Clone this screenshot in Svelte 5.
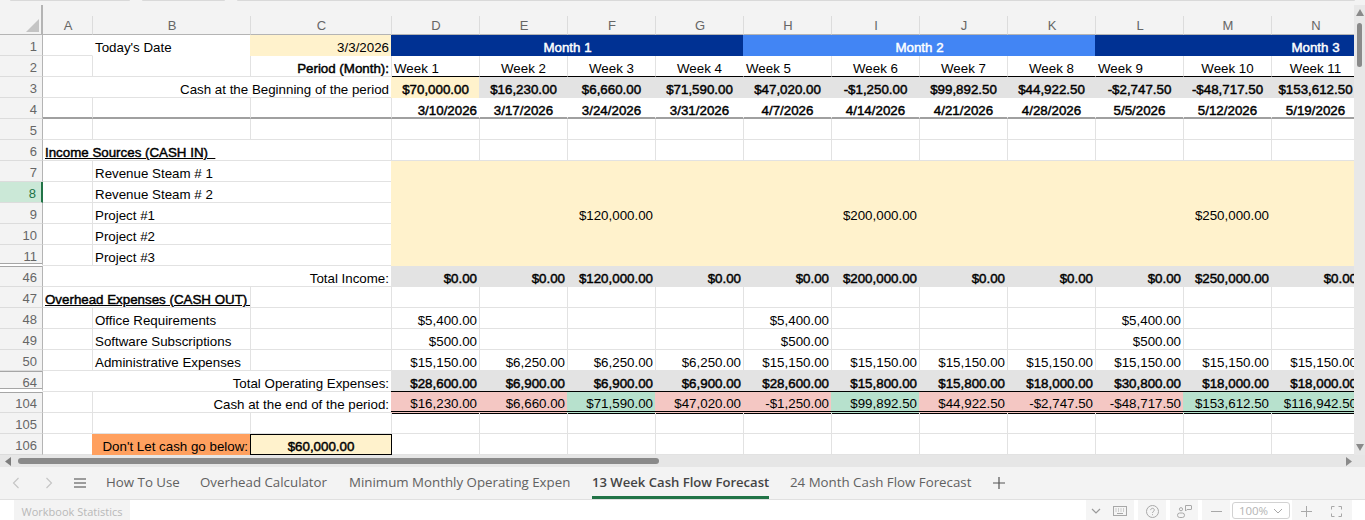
<script>
  const columns = ['A', 'B', 'C', 'D', 'E', 'F', 'G', 'H', 'I', 'J', 'K', 'L', 'M', 'N'];

  const cell = (t = '', cls = '', span = 1) => ({ t, cls, span });
  const weeks = (values, cls) => values.map((v) => cell(v, cls));
  const blanks = (cls = '') => Array.from({ length: 11 }, () => cell('', cls));
  const sparse = (hits, cls = 'r') =>
    Array.from({ length: 11 }, (_, i) => cell(hits[i] || '', cls));

  const row3 = ['$70,000.00', '$16,230.00', '$6,660.00', '$71,590.00', '$47,020.00', '-$1,250.00', '$99,892.50', '$44,922.50', '-$2,747.50', '-$48,717.50', '$153,612.50'];
  const row4 = ['3/10/2026', '3/17/2026', '3/24/2026', '3/31/2026', '4/7/2026', '4/14/2026', '4/21/2026', '4/28/2026', '5/5/2026', '5/12/2026', '5/19/2026'];
  const income = ['$0.00', '$0.00', '$120,000.00', '$0.00', '$0.00', '$200,000.00', '$0.00', '$0.00', '$0.00', '$250,000.00', '$0.00'];
  const admin = ['$15,150.00', '$6,250.00', '$6,250.00', '$6,250.00', '$15,150.00', '$15,150.00', '$15,150.00', '$15,150.00', '$15,150.00', '$15,150.00', '$15,150.00'];
  const opex = ['$28,600.00', '$6,900.00', '$6,900.00', '$6,900.00', '$28,600.00', '$15,800.00', '$15,800.00', '$18,000.00', '$30,800.00', '$18,000.00', '$18,000.00'];
  const ending = [
    ['$16,230.00', 'bad'], ['$6,660.00', 'bad'], ['$71,590.00', 'good'], ['$47,020.00', 'bad'],
    ['-$1,250.00', 'bad'], ['$99,892.50', 'good'], ['$44,922.50', 'bad'], ['-$2,747.50', 'bad'],
    ['-$48,717.50', 'bad'], ['$153,612.50', 'good'], ['$116,942.50', 'good']
  ];

  const weekRow = ['Week 1', 'Week 2', 'Week 3', 'Week 4', 'Week 5', 'Week 6', 'Week 7', 'Week 8', 'Week 9', 'Week 10', 'Week 11'].map((w, i) => {
    const first = i % 4 === 0;
    const last = i % 4 === 3;
    return cell(w, `under ${first ? 'l' : 'c'} ${last ? 'noright' : ''}`);
  });

  const rows = [
    { n: 1, cells: [
      cell('', 'noright'), cell("Today's Date", 'l nobottom'), cell('3/3/2026', 'r yellow'),
      cell('Month 1', 'c b dark', 4), cell('Month 2', 'c b blue', 4), cell('', 'dark', 2), cell('Month 3', 'c b dark')
    ] },
    { n: 2, cells: [cell(), cell(), cell('Period (Month):', 'r b'), ...weekRow] },
    { n: 3, cells: [
      cell('Cash at the Beginning of the period', 'r', 3),
      ...row3.map((v, i) => cell(v, `c b ${i === 0 ? 'yellow' : 'gray'}`))
    ] },
    { n: 4, cells: [
      cell('', 'freeze'), cell('', 'freeze'), cell('', 'freeze'),
      ...row4.map((v, i) => cell(v, `b freeze noright ${i === 0 ? 'r' : 'c'}`))
    ] },
    { n: 5, cells: [cell(), cell(), cell(), ...blanks()] },
    { n: 6, cells: [cell('Income Sources (CASH IN)  ', 'b u', 3), ...blanks()] },
    { n: 7, cells: [cell(), cell('Revenue Steam # 1', 'l', 2), ...blanks('yellow')] },
    { n: 8, sel: true, cells: [cell(), cell('Revenue Steam # 2', 'l', 2), ...blanks('yellow')] },
    { n: 9, cells: [cell(), cell('Project #1', 'l', 2), ...sparse({ 2: '$120,000.00', 5: '$200,000.00', 9: '$250,000.00' }, 'r yellow')] },
    { n: 10, cells: [cell(), cell('Project #2', 'l', 2), ...blanks('yellow')] },
    { n: 11, edge: 'below', cells: [cell(), cell('Project #3', 'l', 2), ...blanks('yellow')] },
    { n: 46, edge: 'above', cells: [cell('Total Income:', 'r', 3), ...weeks(income, 'r b gray')] },
    { n: 47, cells: [cell('Overhead Expenses (CASH OUT) ', 'b u', 2), cell(), ...blanks()] },
    { n: 48, cells: [cell(), cell('Office Requirements', 'l'), cell(), ...sparse({ 0: '$5,400.00', 4: '$5,400.00', 8: '$5,400.00' })] },
    { n: 49, cells: [cell(), cell('Software Subscriptions', 'l'), cell(), ...sparse({ 0: '$500.00', 4: '$500.00', 8: '$500.00' })] },
    { n: 50, cells: [cell(), cell('Administrative Expenses', 'l'), cell(), ...weeks(admin, 'r')] },
    { n: 64, edge: 'both', cells: [cell('Total Operating Expenses:', 'r', 3), ...weeks(opex, 'r b gray blackline')] },
    { n: 104, edge: 'above', cells: [
      cell(), cell('Cash at the end of the period:', 'r', 2),
      ...ending.map(([v, state]) => cell(v, `r doubleline ${state}`))
    ] },
    { n: 105, cells: [cell(), cell(), cell(), ...blanks()] },
    { n: 106, cells: [
      cell(), cell("Don't Let cash go below:", 'r orange'), cell('$60,000.00', 'c b yellow boxed'), ...blanks()
    ] }
  ];

  const tabs = [
    { label: 'How To Use', w: 94 },
    { label: 'Overhead Calculator', w: 149 },
    { label: 'Minimum Monthly Operating Expen', w: 243 },
    { label: '13 Week Cash Flow Forecast', w: 198, active: true },
    { label: '24 Month Cash Flow Forecast', w: 202 }
  ];
</script>

<div class="app">
  <div class="strip">
    <span class="seg s1"></span>
    <span class="seg s2"></span>
    <span class="seg s3"></span>
  </div>

  <div class="main">
    <div class="sheet">
      <div class="grid">
        <div class="corner">
          <svg width="13" height="13" viewBox="0 0 13 13"><polygon points="13,0 13,13 0,13" fill="#c4c4c4" /></svg>
        </div>
        {#each columns as c}
          <div class="colhead">{c}</div>
        {/each}

        {#each rows as row}
          <div class="rowhead {row.edge || ''}" class:sel={row.sel}>{row.n}</div>
          {#each row.cells as x}
            <div class="cell {x.cls}" style:grid-column="span {x.span}">{x.t}</div>
          {/each}
        {/each}
      </div>
    </div>

    <div class="vbar">
      <svg class="arrow-up" width="8" height="7" viewBox="0 0 8 7"><polygon points="4,0 8,7 0,7" fill="#8a8a8a" /></svg>
      <span class="vthumb"></span>
      <svg class="arrow-down" width="8" height="7" viewBox="0 0 8 7"><polygon points="0,0 8,0 4,7" fill="#8a8a8a" /></svg>
    </div>
  </div>

  <div class="hbar">
    <svg width="6" height="9" viewBox="0 0 6 9"><polygon points="6,0 6,9 0,4.5" fill="#7d7d7d" /></svg>
    <span class="hthumb"></span>
    <svg class="arrow-right" width="6" height="9" viewBox="0 0 6 9"><polygon points="0,0 6,4.5 0,9" fill="#8a8a8a" /></svg>
  </div>

  <div class="tabbar">
    <div class="navs">
      <svg width="8" height="12" viewBox="0 0 8 12"><path d="M6.5 1 1.5 6l5 5" fill="none" stroke="#c4c4c4" stroke-width="1.1" /></svg>
      <svg width="8" height="12" viewBox="0 0 8 12"><path d="M1.5 1l5 5-5 5" fill="none" stroke="#c4c4c4" stroke-width="1.1" /></svg>
      <svg class="menu" width="12" height="10" viewBox="0 0 12 10"><path d="M0 1h12M0 5h12M0 9h12" stroke="#444" stroke-width="1.1" /></svg>
    </div>
    {#each tabs as tab}
      <div class="tab" class:active={tab.active} style:width="{tab.w}px"><span>{tab.label}</span></div>
    {/each}
    <svg class="plus" width="12" height="12" viewBox="0 0 12 12"><path d="M6 0v12M0 6h12" stroke="#555" stroke-width="1.2" /></svg>
  </div>

  <div class="status">
    <div class="stats">Workbook Statistics</div>
    <div class="tools">
      <div class="chip w20">
        <svg width="10" height="6" viewBox="0 0 10 6"><path d="M1 1l4 4 4-4" fill="none" stroke="#9a9a9a" stroke-width="1.2" /></svg>
      </div>
      <div class="chip w28">
        <svg width="14" height="10" viewBox="0 0 14 10"><rect x=".5" y=".5" width="13" height="9" fill="none" stroke="#a8a8a8" /><path d="M2.5 3h1M5 3h1M7.5 3h1M10 3h1M2.5 5h1M5 5h1M7.5 5h1M10 5h1M4 7.5h6" stroke="#a8a8a8" /></svg>
      </div>
      <div class="chip w28 ml4">
        <svg width="13" height="13" viewBox="0 0 13 13"><circle cx="6.5" cy="6.5" r="6" fill="none" stroke="#a8a8a8" /><path d="M4.7 5.1c0-1.1.8-1.8 1.8-1.8s1.8.7 1.8 1.7c0 1.4-1.8 1.5-1.8 3" fill="none" stroke="#a8a8a8" /><path d="M6.5 9.2v1" stroke="#a8a8a8" /></svg>
      </div>
      <div class="chip w28 ml4">
        <svg width="15" height="13" viewBox="0 0 15 13"><circle cx="4" cy="4.2" r="1.6" fill="none" stroke="#a8a8a8" /><rect x=".5" y="8" width="7" height="4.5" rx="2.2" fill="none" stroke="#a8a8a8" /><path d="M8.5.5h5.5a.5.5 0 0 1 .5.5v3a.5.5 0 0 1-.5.5h-4L8.5 6z" fill="none" stroke="#a8a8a8" /></svg>
      </div>
      <div class="chip w28 ml4">
        <svg width="11" height="1" viewBox="0 0 11 1"><path d="M0 .5h11" stroke="#a8a8a8" /></svg>
      </div>
      <div class="zoombox">
        <span>100%</span>
        <svg width="10" height="6" viewBox="0 0 10 6"><path d="M1 1l4 4 4-4" fill="none" stroke="#a8a8a8" /></svg>
      </div>
      <div class="chip w28 ml2">
        <svg width="11" height="11" viewBox="0 0 11 11"><path d="M5.5 0v11M0 5.5h11" stroke="#a8a8a8" /></svg>
      </div>
      <div class="chip w32">
        <svg width="11" height="11" viewBox="0 0 11 11"><path d="M.5 3.5v-3h3M7.5.5h3v3M10.5 7.5v3h-3M3.5 10.5h-3v-3" fill="none" stroke="#a8a8a8" /></svg>
      </div>
    </div>
  </div>
</div>

<style>
  :global(body) {
    margin: 0;
    background: #fff;
  }

  .app {
    width: 1365px;
    height: 520px;
    overflow: hidden;
    font-family: "Liberation Sans", Arial, sans-serif;
  }

  .strip {
    display: flex;
    height: 2px;
    background: #f3f3f3;
  }

  .seg {
    height: 1px;
    background: #d9d9d9;
    border-radius: 0 0 2px 2px;
  }
  .s1 { width: 120px; margin-left: 10px; }
  .s2 { width: 83px; margin-left: 12px; }
  .s3 { width: 1118px; margin-left: 12px; }

  .main {
    display: flex;
    height: 453px;
    background: #f3f3f3;
  }

  .sheet {
    width: 1354px;
    overflow: hidden;
    padding-top: 14px;
    box-sizing: border-box;
  }

  .grid {
    display: grid;
    grid-template-columns: 43px 50px 158px 141px repeat(11, 88px);
    grid-template-rows: 19px;
    grid-auto-rows: 21px;
    background: #fff;
    font-size: 13.33px;
    color: #000;
  }

  .corner {
    background: #f3f3f3;
    border-bottom: 1px solid #b4b4b4;
    border-right: 2px solid #b4b4b4;
    margin-top: -11px;
    height: 30px;
    box-sizing: border-box;
    padding: 14px 0 0 26px;
  }
  .corner svg { display: block; }

  .colhead {
    background: #f3f3f3;
    border-right: 1px solid #dcdcdc;
    border-bottom: 1px solid #b4b4b4;
    color: #666;
    font-size: 13px;
    line-height: 19px;
    text-align: center;
    padding-left: 1px;
    box-sizing: border-box;
  }

  .rowhead {
    background: #f3f3f3;
    border-right: 1px solid #b4b4b4;
    border-bottom: 1px solid #dcdcdc;
    color: #666;
    font-size: 13px;
    line-height: 20px;
    text-align: right;
    padding: 2px 5px 0 0;
    box-sizing: border-box;
    overflow: hidden;
  }
  .rowhead.below {
    border-bottom: 2px solid #fff;
    box-shadow: inset 0 -1px #a6a6a6;
  }
  .rowhead.above { box-shadow: inset 0 1px #a6a6a6; }
  .rowhead.both {
    border-bottom: 3px solid #fff;
    box-shadow: inset 0 1px #a6a6a6, inset 0 -1px #a6a6a6;
  }
  .rowhead.sel {
    background: #cbe8d7;
    color: #217346;
    border-right: 2px solid #217346;
  }

  .cell {
    box-sizing: border-box;
    border-right: 1px solid #e2e2e2;
    border-bottom: 1px solid #e2e2e2;
    line-height: 20px;
    padding: 3px 2px 0;
    white-space: pre;
    overflow: hidden;
  }

  .l { text-align: left; }
  .r { text-align: right; }
  .c { text-align: center; }
  /* the reference's bold keeps the regular advance widths */
  .b { -webkit-text-stroke: 0.45px currentColor; }
  .u { text-decoration: underline; }
  .noright { border-right-color: transparent; }
  .nobottom { border-bottom-color: transparent; }

  /* fills cover the gridline to their left */
  .yellow, .gray, .dark, .blue, .bad, .good, .orange { margin-left: -1px; }
  .c.yellow, .c.gray, .c.dark, .c.blue { padding-left: 3px; }
  .yellow { background: #fff2cc; border-color: transparent; }
  .gray { background: #e3e3e3; border-color: transparent; }
  .dark { background: #003193; border-color: transparent; color: #fff; }
  .blue { background: #4285f4; border-color: transparent; color: #fff; }
  .bad { background: #f4c7c3; border-right-color: transparent; }
  .good { background: #b7e1cd; border-right-color: transparent; }
  .orange { background: #ffa05f; border-color: transparent; }

  .under { border-bottom-color: #000; }
  .freeze { border-bottom: 2px solid #a0a0a0; }
  .blackline { border-bottom-color: #000; margin-top: -1px; padding-top: 4px; }
  .doubleline { border-bottom: 3px double #000; padding-top: 2px; margin-bottom: -1px; }
  .boxed { border: 1px solid #000; padding-top: 2px; }
  .c.boxed { padding-left: 2px; }

  .vbar {
    position: relative;
    width: 11px;
    margin-top: 3px;
    background: #e8e8e8;
  }
  .vbar svg {
    position: absolute;
    left: 2px;
  }
  .arrow-up { top: 4px; }
  .arrow-down { top: 439px; }
  .vthumb {
    position: absolute;
    top: 18px;
    left: 3px;
    width: 5px;
    height: 44px;
    background: #8a8a8a;
    border-radius: 3px;
  }

  .hbar {
    position: relative;
    display: flex;
    align-items: center;
    height: 12px;
    padding-left: 5px;
    background: #e6e6e6;
  }
  .hthumb {
    width: 641px;
    height: 6px;
    margin-left: 7px;
    background: #8a8a8a;
    border-radius: 3px;
  }
  .arrow-right {
    margin-left: 687px;
  }

  .tabbar {
    display: flex;
    align-items: stretch;
    height: 33px;
    box-sizing: border-box;
    background: #f3f3f3;
    border-bottom: 1px solid #e0e0e0;
    font-family: "Open Sans", "Noto Sans", sans-serif;
    font-size: 13.3px;
    color: #616161;
  }

  .navs {
    display: flex;
    align-items: center;
    width: 96px;
    padding-left: 12px;
    box-sizing: border-box;
    gap: 25px;
  }
  .menu { margin-left: -4px; }

  .tab {
    padding-left: 10px;
    line-height: 30px;
    box-sizing: border-box;
    white-space: nowrap;
  }
  .tab span {
    display: inline-block;
    height: 32px;
    box-sizing: border-box;
    vertical-align: top;
  }
  .tab.active span {
    font-size: 13.1px;
    font-weight: 600;
    color: #444;
    border-bottom: 3px solid #217346;
  }

  .plus {
    align-self: center;
    margin-left: 11px;
  }

  .status {
    display: flex;
    justify-content: space-between;
    height: 20px;
    padding: 0 13px 0 14px;
    background: #fff;
  }

  .stats {
    width: 116px;
    background: #f3f3f3;
    color: #b8b8b8;
    font-family: "Open Sans", "Noto Sans", sans-serif;
    font-size: 11px;
    line-height: 24px;
    text-align: center;
    white-space: nowrap;
    overflow: hidden;
  }

  .tools {
    display: flex;
    align-items: stretch;
  }

  .chip {
    display: flex;
    align-items: center;
    justify-content: center;
    background: #f5f5f5;
    padding-top: 2px;
    box-sizing: border-box;
  }
  .w20 { width: 20px; }
  .w28 { width: 28px; }
  .w32 { width: 32px; }
  .ml2 { margin-left: 2px; }
  .ml4 { margin-left: 4px; }

  .zoombox {
    display: flex;
    align-items: center;
    justify-content: center;
    gap: 5px;
    width: 58px;
    margin: 2px 0 1px 2px;
    box-sizing: border-box;
    border: 1px solid #d2d2d2;
    border-radius: 3px;
    color: #b4b4b4;
    font-family: "Open Sans", "Noto Sans", sans-serif;
    font-size: 11.5px;
  }
</style>
